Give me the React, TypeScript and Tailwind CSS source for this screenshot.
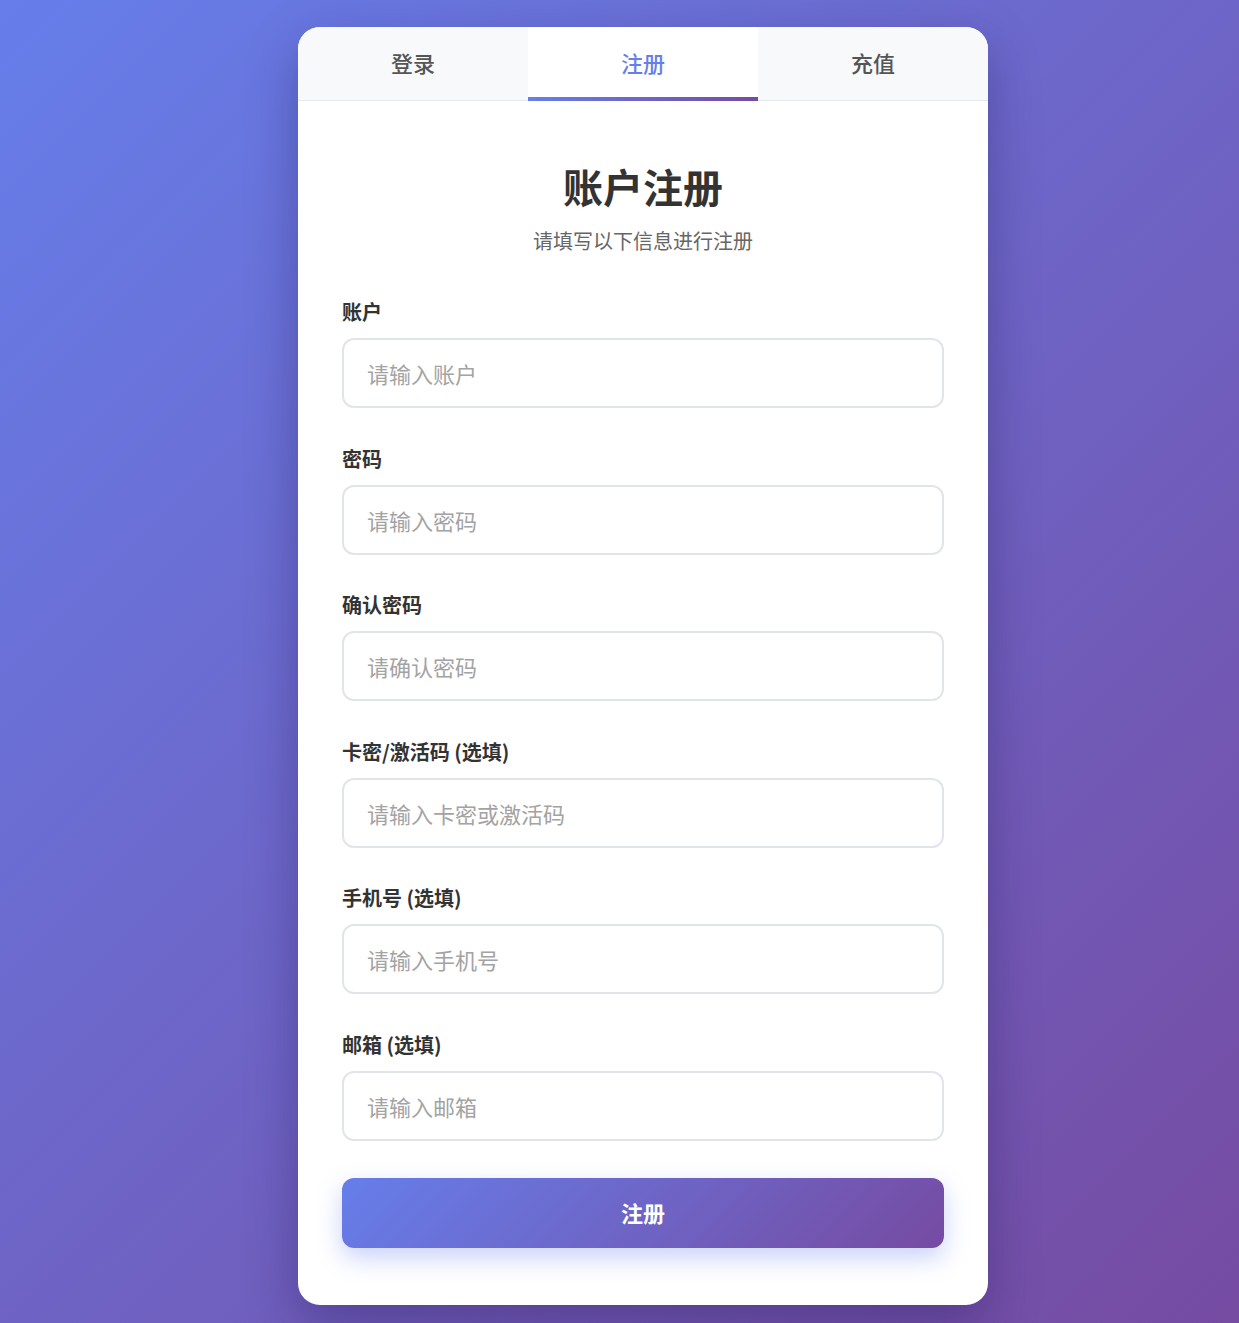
import React from "react";

const fields = [
  { label: "账户", placeholder: "请输入账户", type: "text" },
  { label: "密码", placeholder: "请输入密码", type: "password" },
  { label: "确认密码", placeholder: "请确认密码", type: "password" },
  { label: "卡密/激活码 (选填)", placeholder: "请输入卡密或激活码", type: "text" },
  { label: "手机号 (选填)", placeholder: "请输入手机号", type: "text" },
  { label: "邮箱 (选填)", placeholder: "请输入邮箱", type: "text" },
];

const tabs = ["登录", "注册", "充值"];

export default function App() {
  return (
    <div
      className="min-h-[1323px] w-full bg-[linear-gradient(135deg,#667eea_0%,#764ba2_100%)] flex justify-center pt-[27px] pl-[47px]"
      style={{ fontFamily: '"Noto Sans CJK SC", "Noto Sans", sans-serif' }}
    >
      <div className="w-[690px] h-[1278px] bg-white rounded-[22px] overflow-hidden shadow-[0_20px_50px_rgba(30,20,80,0.35)] flex flex-col">
        {/* tab bar */}
        <div className="flex h-[74px] bg-[#f8f9fa] border-b border-[#e6e8ea]">
          {tabs.map((t) => {
            const active = t === "注册";
            return (
              <div
                key={t}
                className={
                  active
                    ? "relative flex-1 flex items-center justify-center bg-white text-[#667eea] text-[22px] font-medium"
                    : "relative flex-1 flex items-center justify-center text-[#555] text-[22px] font-medium"
                }
              >
                <span className="-mt-[2px]">{t}</span>
                {active && (
                  <div className="absolute left-0 right-0 bottom-[-1px] h-[4px] bg-[linear-gradient(90deg,#667eea,#764ba2)]" />
                )}
              </div>
            );
          })}
        </div>

        {/* form body */}
        <div className="pl-[44px] pr-[44px] pt-[61px] flex flex-col">
          <h1 className="text-center text-[40px] leading-[48px] font-bold text-[#333]">账户注册</h1>
          <p className="text-center text-[20px] leading-[30px] text-[#666] mt-[16px] mb-[41px]">
            请填写以下信息进行注册
          </p>

          {fields.map((f, i) => (
            <div key={f.label} className={i === fields.length - 1 ? "mb-[37px]" : "mb-[35.5px]"}>
              <label className="block text-[20px] leading-[30px] font-bold text-[#333] mb-[11px]">
                {f.label}
              </label>
              <input
                type={f.type}
                placeholder={f.placeholder}
                className="w-full h-[70px] border-2 border-[#e1e5e9] rounded-[12px] px-[23px] text-[22px] text-[#333] placeholder:text-[#a3a3a3] outline-none bg-white"
              />
            </div>
          ))}

          <button className="h-[70px] rounded-[12px] bg-[linear-gradient(135deg,#667eea_0%,#764ba2_100%)] text-white text-[22px] font-bold shadow-[0_10px_24px_rgba(102,126,234,0.35)]">
            注册
          </button>
        </div>
      </div>
    </div>
  );
}
